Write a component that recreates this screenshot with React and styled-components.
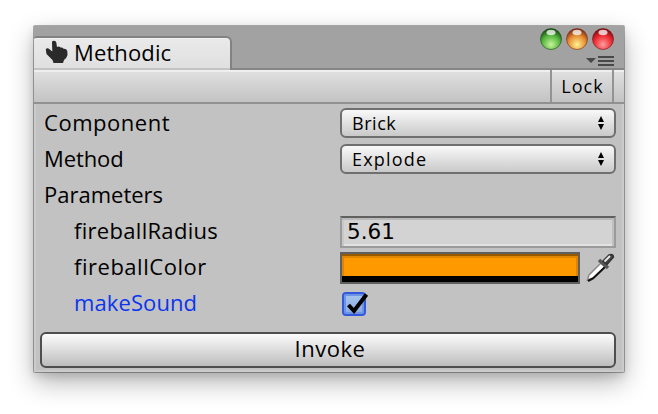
import React from 'react';
import styled, { createGlobalStyle } from 'styled-components';

const Global = createGlobalStyle`
  *, *::before, *::after { box-sizing: border-box; }
  body { margin: 0; background: #fff; overflow: hidden; }
`;

const Page = styled.main`
  width: 658px;
  height: 414px;
  padding: 26px 34px 0;
  background: #fff;
  font: 22px "Open Sans", "Noto Sans", sans-serif;
  color: #000;
`;

const Window = styled.section`
  width: 590px;
  height: 346px;
  background: #c2c2c2;
  border-radius: 1px;
  box-shadow: 0 0 0 1px rgba(0, 0, 0, 0.3), 0 10px 26px rgba(0, 0, 0, 0.3), 0 4px 10px rgba(0, 0, 0, 0.12);
`;

const TitleBar = styled.header`
  display: flex;
  justify-content: space-between;
  height: 44px;
  padding-top: 10px;
  background: #a2a2a2;
  box-shadow: inset 0 -2px #858585;
`;

const Tab = styled.div`
  display: flex;
  align-items: center;
  gap: 6px;
  width: 198px;
  height: 34px;
  padding: 0 0 4px 11px;
  border: solid #828282;
  border-width: 2px 2px 0 0;
  border-radius: 3px 6px 0 0;
  background: linear-gradient(#eaeaea, #dfdfdf);
  box-shadow: inset 0 1px #f2f2f2, inset 0 -2px #c3c3c3;
`;

const Label = styled.span`
  white-space: nowrap;
  line-height: 30px;
  letter-spacing: ${(p) => p.$track || 0}px;
`;

const Controls = styled.div`
  display: flex;
  flex-direction: column;
  align-items: flex-end;
  gap: 4px;
  margin: -9px 9px 0 0;
`;

const Lights = styled.div`
  display: flex;
  gap: 2px;
`;

const Toolbar = styled.div`
  display: flex;
  justify-content: flex-end;
  height: 34px;
  padding-right: 10px;
  border-bottom: 2px solid #919191;
  background: linear-gradient(#efefef 0 2px, #dfdfdf 2px, #c3c3c3);
`;

const LockButton = styled.button`
  width: 64px;
  padding: 0 0 0 1px;
  border: solid #939393;
  border-width: 0 2px;
  background: none;
  font: 18px/32px "Open Sans", sans-serif;
  letter-spacing: 1px;
  color: #000;
`;

const Form = styled.div`
  height: 268px;
  padding: 1px 8px 0 6px;
  border: solid #cbcbcb;
  border-width: 0 2px 2px 2px;
`;

const Row = styled.div`
  display: grid;
  grid-template-columns: 296px 276px;
  align-items: center;
  height: 36px;
  margin-left: 2px;
  color: ${(p) => (p.$active ? '#0a35f0' : '#000')};

  & > ${Label} {
    padding: 0 0 2px ${(p) => (p.$nested ? 30 : 0)}px;
  }
`;

const Select = styled.button`
  display: flex;
  justify-content: space-between;
  align-items: center;
  width: 276px;
  height: 30px;
  padding: 0 9px 0 10px;
  border: 2px solid #6f6f6f;
  border-radius: 6px;
  background: linear-gradient(#f9f9f9, #c9c9c9);
  font: 18px "Open Sans", sans-serif;
  color: #000;

  ${Label} { margin-top: -1px; }
`;

const NumberField = styled.div`
  width: 276px;
  height: 32px;
  margin-top: 2px;
  padding-left: 5px;
  border: 2px solid #9b9b9b;
  border-top-color: #606060;
  background: #d3d3d3;
  box-shadow: inset 0 2px #b9b9b9, inset 2px 0 #c8c8c8, inset -2px 0 #c0c0c0, inset 0 -2px #e2e2e2;
  font: 21.5px/27px "DejaVu Sans", sans-serif;
`;

const ColorLine = styled.div`
  display: flex;
  gap: 4px;
  margin-top: 2px;
`;

const Swatch = styled.div`
  width: 240px;
  height: 32px;
  border: 2px solid #5f5f5f;
  background:
    linear-gradient(#965b00 0 2px, transparent 2px 22px, #000 22px),
    linear-gradient(90deg, #dd8500 0 2px, transparent 2px 234px, #dd8500 234px),
    linear-gradient(#e08700 4px, #ff9900 4px);
`;

const CheckBox = styled.div`
  display: flex;
  width: 24px;
  height: 24px;
  margin: 2px 0 0 2px;
  border: 2px solid #3458dc;
  border-radius: 4px;
  background: linear-gradient(#a9c5ec, #86aae6);
  box-shadow: inset 0 0 0 2px #6c94e3;

  svg { flex: none; overflow: visible; }
`;

const InvokeButton = styled.button`
  display: block;
  width: 576px;
  height: 36px;
  margin: 11px 0 0 -2px;
  padding: 0 0 3px 4px;
  border: 2px solid #4e4e4e;
  border-radius: 6px;
  background: linear-gradient(#fcfcfc, #bdbdbd);
  font: 22px/29px "Open Sans", sans-serif;
  letter-spacing: 0.5px;
  color: #000;
`;

const Hand = () => (
  <svg width="23" height="24" viewBox="0 0 23 24" fill="#2a2a2a">
    <path d="M7 2Q7 .8 9 .8Q11 .8 11.300 2.500L12 7Q14 6 15.500 7.500Q17.500 7 18.500 8.800Q21.500 8.500 22.300 11L22.500 15Q22 17.500 19 20L18 23H8.500L7.500 20L1.500 14L.8 9.500Q1.500 7.500 3.500 8.500L7.300 11.500Z" />
  </svg>
);

const Light = ({ id, edge, mid, glow }) => (
  <svg width="24" height="24" viewBox="0 0 24 24">
    <defs>
      <radialGradient id={id} cx=".5" cy=".76" r=".72">
        <stop offset="0" stopColor={glow} />
        <stop offset=".6" stopColor={mid} />
        <stop offset="1" stopColor={edge} />
      </radialGradient>
    </defs>
    <circle cx="12" cy="12" r="10.500" fill={`url(#${id})`} stroke={edge} strokeOpacity=".6" />
    <ellipse cx="12" cy="5.500" rx="4.500" ry="2.800" fill="#fff" opacity=".75" />
  </svg>
);

const MenuMark = () => (
  <svg width="30" height="12" viewBox="1 0 30 12" fill="#484848">
    <path d="M2 3H12L7 8ZM14 1H30V3H14ZM14 5H30V7H14ZM14 9H30V11H14Z" />
  </svg>
);

const Arrows = () => (
  <svg width="8" height="14" viewBox="0 0 8 14">
    <path d="M1 6L4 0L7 6ZM1 8H7L4 14Z" />
  </svg>
);

const Dropper = () => (
  <svg width="32" height="32" viewBox="0 0 32 32">
    <path d="M3.500 28L5 23L17 11L21 15L9 26Z" fill="#fff" stroke="#8c8c8c" strokeWidth="1.500" />
    <path d="M4 29L9 26.500L21 15" fill="none" stroke="#111" strokeWidth="2" />
    <path d="M15 8L24 16" stroke="#555" strokeWidth="3.500" />
    <path d="M19 9L25 3Q29 1.500 29.500 5L23 12.500Z" fill="#444" stroke="#333" strokeWidth="1.500" />
    <path d="M20.500 9.500L26 4" stroke="#e6e6e6" strokeWidth="2" />
  </svg>
);

const Check = () => (
  <svg width="20" height="20" viewBox="0 0 20 20">
    <path d="M4.500 11L10 17L22.500 0.500" fill="none" stroke="#000" strokeWidth="4" />
  </svg>
);

export default function App() {
  return (
    <Page>
      <Global />
      <Window>
        <TitleBar>
          <Tab>
            <Hand />
            <Label $track={0.12}>Methodic</Label>
          </Tab>
          <Controls>
            <Lights>
              <Light id="green" edge="#174d12" mid="#55b53c" glow="#c6f49a" />
              <Light id="amber" edge="#7d2c13" mid="#e58a30" glow="#fff291" />
              <Light id="red" edge="#7c0d12" mid="#ec2a30" glow="#ff9d9d" />
            </Lights>
            <MenuMark />
          </Controls>
        </TitleBar>
        <Toolbar>
          <LockButton>Lock</LockButton>
        </Toolbar>
        <Form>
          <Row>
            <Label $track={0.52}>Component</Label>
            <Select><Label $track={0.55}>Brick</Label><Arrows /></Select>
          </Row>
          <Row>
            <Label $track={-0.1}>Method</Label>
            <Select><Label $track={1.2}>Explode</Label><Arrows /></Select>
          </Row>
          <Row>
            <Label>Parameters</Label>
          </Row>
          <Row $nested>
            <Label $track={0.3}>fireballRadius</Label>
            <NumberField>5.61</NumberField>
          </Row>
          <Row $nested>
            <Label $track={0.52}>fireballColor</Label>
            <ColorLine><Swatch /><Dropper /></ColorLine>
          </Row>
          <Row $nested $active>
            <Label $track={0.1}>makeSound</Label>
            <CheckBox><Check /></CheckBox>
          </Row>
          <InvokeButton>Invoke</InvokeButton>
        </Form>
      </Window>
    </Page>
  );
}
